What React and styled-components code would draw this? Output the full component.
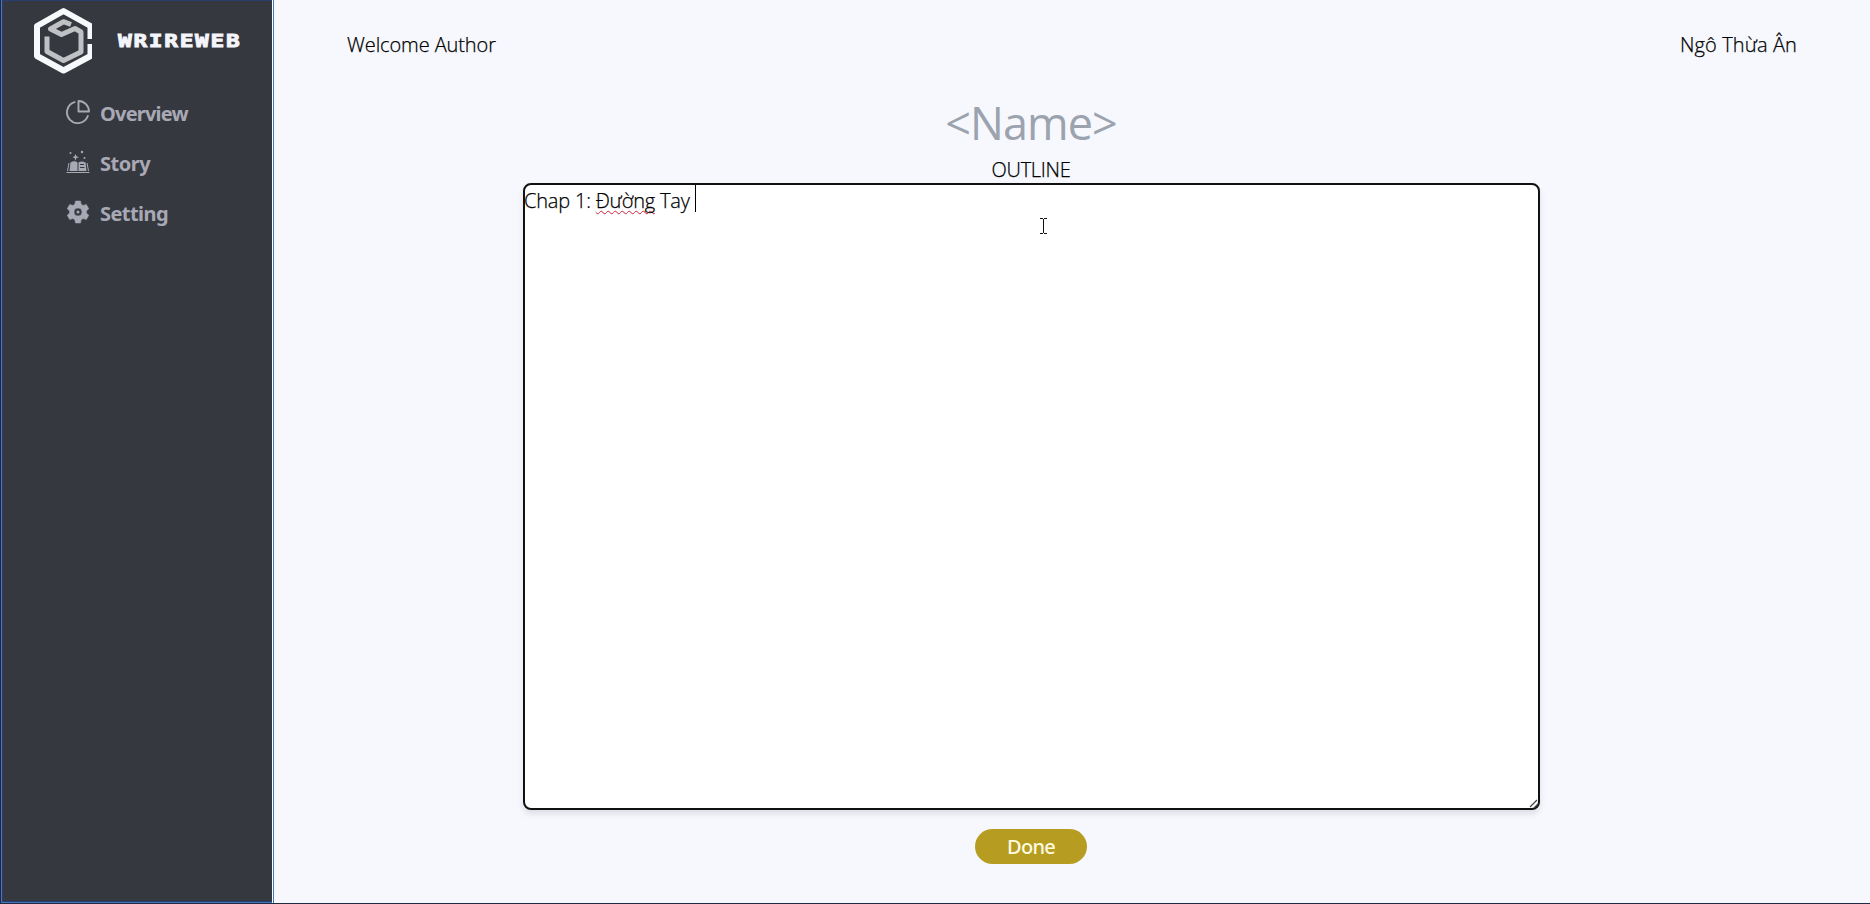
import React from "react";
import styled, { createGlobalStyle } from "styled-components";

const Global = createGlobalStyle`
  *, *::before, *::after { box-sizing: border-box; }
  html, body { margin: 0; overflow: hidden; background: #f6f8fd; }
  body { font-family: "Open Sans", "Noto Sans", sans-serif; font-weight: 300; font-size: 20px; color: #000; }
`;

const Page = styled.div`
  display: flex;
  height: 904px;
  border-bottom: 1px solid #1f2b40;
`;

const SidebarFrame = styled.aside`
  width: 274px;
  flex: none;
  display: flex;
  background: #fff;
  border-right: 1px solid #4377c4;
  border-left: 1px solid #25283a;
`;

const Sidebar = styled.div`
  width: 271px;
  background: #363840;
  border: solid #4a72bd;
  border-width: 0 0 1px 1px;
  box-shadow: inset 0 1px 0 #263f70, inset 0 -1px 0 #263f70, inset 1px 0 0 #263f70;
`;

const Brand = styled.div`
  display: flex;
  align-items: center;
  height: 82px;
  padding-left: 30px;
`;

const BrandName = styled.span`
  margin-left: 26px;
  font: bold 18px/20px "DejaVu Sans Mono", monospace;
  letter-spacing: 1.3px;
  color: #f4f5fa;
  -webkit-text-stroke: 0.9px #f4f5fa;
  transform: scaleX(1.27);
  transform-origin: left center;
`;

const Nav = styled.nav`
  display: flex;
  flex-direction: column;
  padding: 6px 0 0 64px;
`;

const NavItem = styled.a`
  display: flex;
  align-items: center;
  height: 50px;
  gap: 10px;
  color: #a8a9b5;
  font-family: "Noto Sans", sans-serif;
  font-weight: 700;
  letter-spacing: ${(p) => p.$spacing || "0"};
  svg { flex: none; margin-top: -2px; }
`;

const Main = styled.main`
  flex: 1;
  display: flex;
  flex-direction: column;
`;

const Header = styled.header`
  display: flex;
  justify-content: space-between;
  padding: 31px 73px 0 73px;
  line-height: 28px;
`;

const HeaderText = styled.span`
  letter-spacing: ${(p) => p.$spacing || "0"};
  -webkit-text-stroke: 0.25px currentColor;
`;

const Editor = styled.section`
  display: flex;
  flex-direction: column;
  align-items: center;
  padding: 39px 82px 0 0;
`;

const StoryName = styled.h1`
  margin: 0;
  font-size: 45px;
  font-weight: 400;
  line-height: 50px;
  letter-spacing: -1px;
  color: #9ca3af;
`;

const Label = styled.span`
  margin: 8px 0 -1px;
  line-height: 28px;
  letter-spacing: -0.3px;
  -webkit-text-stroke: 0.25px currentColor;
`;

const OutlineBox = styled.div`
  position: relative;
  width: 1017px;
  height: 627px;
  border: 2px solid #111;
  border-radius: 8px;
  background: #fff;
  box-shadow: 0 4px 6px rgba(0, 0, 0, 0.1);
  line-height: 32px;
  display: flex;
  align-items: flex-start;
  white-space: pre;
  letter-spacing: -0.2px;
`;

const OutlineText = styled.span`
  margin-left: -0.5px;
  -webkit-text-stroke: 0.25px currentColor;
`;

const Misspelled = styled.span`
  text-decoration: underline wavy #d0213c 1px;
  text-underline-offset: 2px;
  text-decoration-skip-ink: none;
`;

const Caret = styled.i`
  width: 1px;
  height: 27px;
  margin-left: 5px;
  background: #000;
`;

const Pointer = styled.svg`
  position: absolute;
  left: 514px;
  top: 32px;
`;

const Grip = styled.svg`
  position: absolute;
  right: -1px;
  bottom: -1px;
`;

const DoneButton = styled.button`
  margin-top: 19px;
  width: 112px;
  height: 35px;
  border: 0;
  border-radius: 18px;
  background: #b69d21;
  color: #fffbe0;
  font: 500 20px/35px "Noto Sans", sans-serif;
  letter-spacing: -0.7px;
  padding: 0;
`;

const Logo = () => (
  <svg width="60" height="68" viewBox="0 0 60 68" fill="none">
    <path d="M58.500 32V19L31.500 4 5 19V49L31.500 63.500 58.500 49V37" stroke="#f8f9fd" strokeWidth="6" strokeLinejoin="round" />
    <path d="M39 17.500 31.500 14.700 18.500 22 29.500 27.500 43 21.500 49 25V45L31.500 53.500 15 44.500V29.500" stroke="#c0c1c5" strokeWidth="5" strokeLinejoin="round" />
  </svg>
);

const PieIcon = () => (
  <svg width="24" height="24" viewBox="0 0 24 24" fill="none" stroke="currentColor" strokeWidth="1.900" strokeLinejoin="round" strokeLinecap="round">
    <path d="M8.500 2.200A10.700 10.700 0 1 0 21.800 16" />
    <path d="M12.500 1V11.500H23A10.500 10.500 0 0 0 12.500 1Z" />
  </svg>
);

const StoryIcon = () => (
  <svg width="24" height="24" viewBox="0 0 24 24" fill="currentColor">
    <path d="M4.500 12.500Q8.500 10 11.500 12.500V21H3.500Z" />
    <path d="M12.500 12.500Q15.500 10.500 19.500 12.500L20.500 21H12.500Z" />
    <path d="M3 13 1.500 21M21 13 22.500 21M.5 22.500H23.500" fill="none" stroke="currentColor" />
    <path d="M14 14.500H18M14 17.500H18.500" stroke="#363840" />
    <path d="M9.500 4 10.500 6.300 13 7.200 10.500 8 9.500 10.500 8.500 8 6.500 7.200 8.500 6.300Z" />
    <circle cx="4.500" cy="3" r="1" /><circle cx="16" cy="2" r="1.200" /><circle cx="18.500" cy="8" r="1" />
  </svg>
);

const GearIcon = () => (
  <svg width="24" height="24" viewBox="0 0 24 24" fill="currentColor" fillRule="evenodd">
    <path d="M9.500 1H14.500L15.200 4.300 17.200 5.400 20.300 4.400 22.800 8.700 20.400 10.900V13.100L22.800 15.300 20.300 19.600 17.200 18.600 15.200 19.700 14.500 23H9.500L8.800 19.700 6.800 18.600 3.700 19.600 1.200 15.300 3.600 13.100V10.900L1.200 8.700 3.700 4.400 6.800 5.400 8.800 4.300ZM12 8A4 4 0 1 0 12 16 4 4 0 1 0 12 8Z" stroke="currentColor" strokeWidth=".5" strokeLinejoin="round" />
    <circle cx="12" cy="12" r="1.500" />
  </svg>
);

export default function App() {
  return (
    <>
      <Global />
      <Page>
        <SidebarFrame>
          <Sidebar>
            <Brand>
              <Logo />
              <BrandName>WRIREWEB</BrandName>
            </Brand>
            <Nav>
              <NavItem $spacing="-0.8px"><PieIcon />Overview</NavItem>
              <NavItem $spacing="-0.5px"><StoryIcon />Story</NavItem>
              <NavItem $spacing="-0.55px"><GearIcon />Setting</NavItem>
            </Nav>
          </Sidebar>
        </SidebarFrame>
        <Main>
          <Header>
            <HeaderText $spacing="-0.1px">Welcome Author</HeaderText>
            <HeaderText $spacing="0.1px">Ngô Thừa Ân</HeaderText>
          </Header>
          <Editor>
            <StoryName>&lt;Name&gt;</StoryName>
            <Label>OUTLINE</Label>
            <OutlineBox>
              <OutlineText>Chap 1: <Misspelled>Đường</Misspelled> Tay</OutlineText>
              <Caret />
              <Pointer width="9" height="18" viewBox="0 0 9 18" fill="none" stroke="#111">
                <path d="M1 1.500H4M5 1.500H8M4.500 2V16M1 16.500H4M5 16.500H8" />
              </Pointer>
              <Grip width="10" height="10" viewBox="0 0 10 10" stroke="#444" strokeWidth="1.300">
                <path d="M1 8 8 1M5 9 9 5" />
              </Grip>
            </OutlineBox>
            <DoneButton>Done</DoneButton>
          </Editor>
        </Main>
      </Page>
    </>
  );
}
